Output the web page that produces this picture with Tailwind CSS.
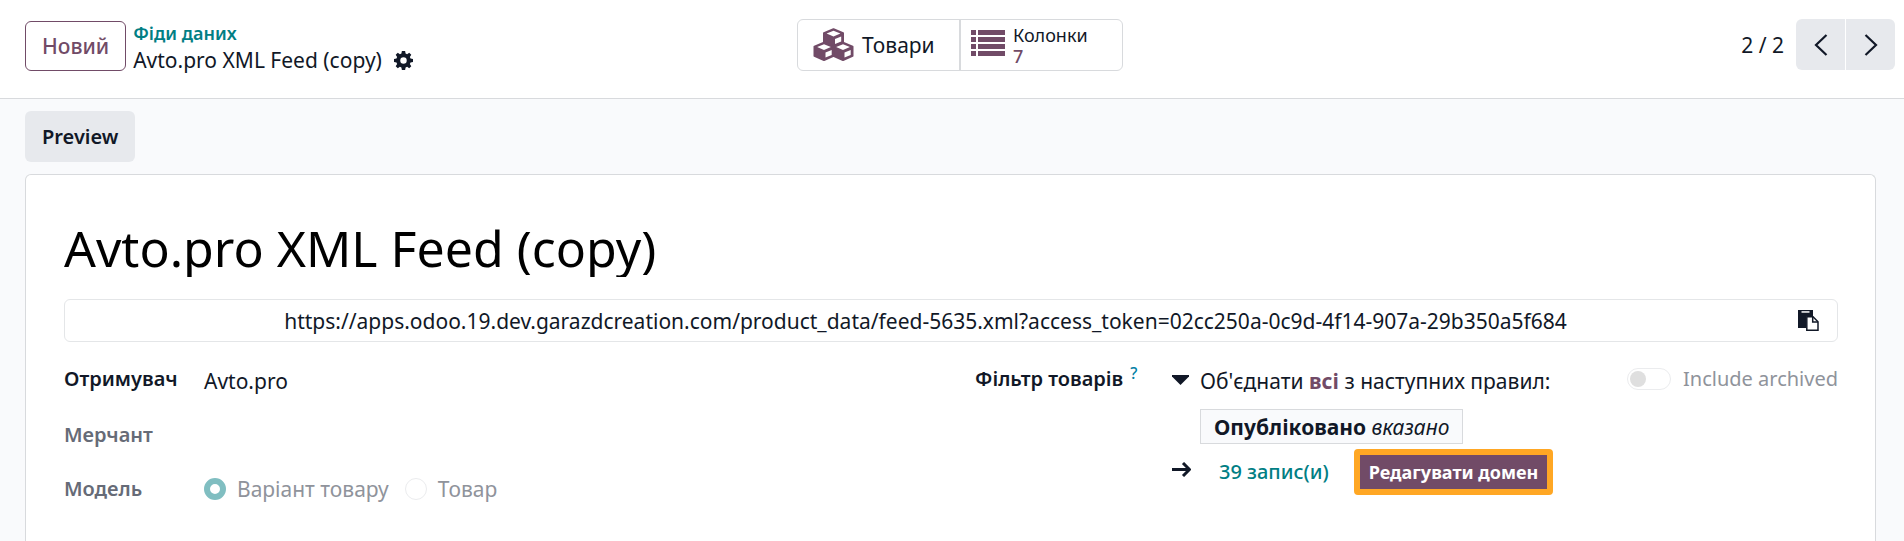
<!DOCTYPE html>
<html lang="uk">
<head>
    <meta charset="UTF-8">
    <meta name="viewport" content="width=device-width, initial-scale=1.0">
    <title>Avto.pro XML Feed (copy)</title>
    <script src="https://cdn.jsdelivr.net/npm/@tailwindcss/browser@4"></script>
</head>
<body class="min-h-screen flex flex-col bg-[#f9fafc] font-['Noto_Sans','Open_Sans',sans-serif] text-[21px] leading-[30px] text-[#111827] overflow-hidden">
    <!-- Control panel -->
    <header class="grid grid-cols-[1fr_auto_1fr] items-start bg-white border-b border-[#d8dadd] pt-[19px] pb-[23px] pl-[25px] pr-[9px]">
        <div class="flex items-start gap-[7px] pt-[2px]">
            <button class="h-[50px] px-4 rounded-md border border-[#714b67] text-[#714b67] font-medium">Новий</button>
            <div class="flex flex-col">
                <a href="#" class="text-[18px] leading-[24px] font-semibold text-[#017e84]">Фіди даних</a>
                <div class="flex items-center gap-3 leading-[30px]">
                    <span>Avto.pro XML Feed (copy)</span>
                    <button aria-label="Дії">
                        <svg class="size-[19px]" viewBox="0 0 20 20" fill="currentColor" fill-rule="evenodd"><path d="M8.300 0h3.400l.5 2.600 1.600.7L16 1.800 18.200 4l-1.500 2.200.7 1.600 2.600.5v3.400l-2.600.5-.7 1.600 1.500 2.200-2.200 2.200-2.200-1.500-1.600.7-.5 2.600H8.300l-.5-2.600-1.600-.7L4 18.200 1.800 16l1.500-2.200-.7-1.600L0 11.700V8.300l2.600-.5.7-1.600L1.800 4 4 1.800l2.200 1.500 1.600-.7zM10 6.600a3.400 3.400 0 1 0 0 6.800 3.400 3.400 0 0 0 0-6.800z"/></svg>
                    </button>
                </div>
            </div>
        </div>

        <div class="flex rounded-md border border-[#d8dadd] h-[52px]">
            <button class="flex items-center gap-2 w-[163px] pl-[15px] border-r-2 border-[#d8dadd]">
                <svg class="w-[41px] h-[34px]" viewBox="0 0 41 34" fill="#714b67" stroke="#714b67" stroke-width="2" stroke-linejoin="round">
                    <g id="cube">
                        <path d="M20.500 1.200l9.500 3.900v9.300l-9.500 4.200-9.500-4.200V5.100z"/>
                        <path d="M20.500 2.700l6.900 2.900-6.900 2.900-6.900-2.900zM22 11l6.200-2.600v5L22 16.100z" fill="#fff" stroke="none"/>
                    </g>
                    <use href="#cube" x="-9.500" y="13.500"/>
                    <use href="#cube" x="9.500" y="13.500"/>
                </svg>
                <span>Товари</span>
            </button>
            <button class="flex items-center gap-2 w-[161px] pl-[10px] text-left">
                <svg class="w-[34px] h-[26px] mb-1" viewBox="0 0 34 26" fill="#714b67"><path d="M0 0h5v5H0zM7 0h27v5H7zM0 7h5v5H0zM7 7h27v5H7zM0 14h5v5H0zM7 14h27v5H7zM0 21h5v5H0zM7 21h27v5H7z"/></svg>
                <span class="flex flex-col pt-[2px] text-[18px] leading-[21px]">
                    <span>Колонки</span>
                    <span class="text-[#714b67] font-medium">7</span>
                </span>
            </button>
        </div>

        <div class="flex items-center justify-end gap-3">
            <span>2 / 2</span>
            <div class="flex gap-px">
                <button aria-label="Назад" class="flex items-center justify-center w-[49px] h-[51px] rounded-l-md bg-[#e7e9ed]">
                    <svg class="w-[14px] h-[22px]" viewBox="0 0 14 22" fill="none" stroke="currentColor" stroke-width="2.200"><path d="M12.500 1L2 11l10.500 10"/></svg>
                </button>
                <button aria-label="Вперед" class="flex items-center justify-center w-[49px] h-[51px] rounded-r-md bg-[#e7e9ed]">
                    <svg class="w-[14px] h-[22px]" viewBox="0 0 14 22" fill="none" stroke="currentColor" stroke-width="2.200"><path d="M1.500 1L12 11 1.500 21"/></svg>
                </button>
            </div>
        </div>
    </header>

    <div class="px-[25px] py-3">
        <button class="h-[51px] px-[17px] rounded-md bg-[#e7e9ed] text-[20px] font-semibold">Preview</button>
    </div>

    <!-- Form sheet -->
    <main class="flex-1 ml-[25px] mr-[28px] pl-[38px] pr-[37px] pt-[44px] bg-white border border-b-0 border-[#d8dadd] rounded-t-md">
        <input type="text" aria-label="Назва" value="Avto.pro XML Feed (copy)" class="block w-full h-[58px] text-[50px] leading-[58px] text-black outline-none">

        <div class="flex items-center h-[43px] mt-[22px] pr-[18px] rounded-md border border-[#e4e6e8]">
            <span class="flex-1 pr-3 text-center whitespace-nowrap">https://apps.odoo.19.dev.garazdcreation.com/product_data/feed-5635.xml?access_token=02cc250a-0c9d-4f14-907a-29b350a5f684</span>
            <button aria-label="Копіювати">
                <svg class="size-[21px]" viewBox="0 0 21 21"><path d="M0 0h15v6H8v12H0z" fill="currentColor"/><path d="M3.500 1.200h8v1.500h-8z" fill="#fff"/><path d="M8.800 6.800h6.200l5 5v8.400H8.800z" fill="#fff" stroke="currentColor" stroke-width="1.500"/><path d="M14.700 6.800v5.200H20" fill="none" stroke="currentColor" stroke-width="1.500"/></svg>
            </button>
        </div>

        <div class="grid grid-cols-2 gap-12 pt-[22px]">
            <div class="grid grid-cols-[140px_1fr] auto-rows-[54px] content-start">
                <span class="text-[20px] font-semibold">Отримувач</span>
                <span class="pt-[2px]">Avto.pro</span>
                <span class="text-[20px] font-semibold text-[#666b77] pt-[2px]">Мерчант</span>
                <span></span>
                <span class="text-[20px] font-semibold text-[#666b77] pt-[2px]">Модель</span>
                <div class="flex items-start gap-4 pt-[2px] text-[#8f939b]">
                    <label class="flex items-center gap-[11px]">
                        <input type="radio" name="model" checked disabled class="appearance-none size-[22px] rounded-full border-[#80bec1] border-6 bg-white">
                        Варіант товару
                    </label>
                    <label class="flex items-center gap-[11px]">
                        <input type="radio" name="model" disabled class="appearance-none size-[22px] rounded-full border border-[#ebecee] bg-white">
                        Товар
                    </label>
                </div>
            </div>

            <div class="flex items-start">
                <div class="flex w-[197px] shrink-0 gap-[7px] text-[20px] font-semibold">Фільтр товарів <sup class="top-0 text-[16px] leading-[18px] font-medium text-[#0180a5]">?</sup></div>
                <div class="flex-1 grid grid-cols-[28px_1fr] items-center whitespace-nowrap">
                    <svg class="w-[17px] h-[10px]" viewBox="0 0 17 10" fill="currentColor"><path d="M0 0h17v1.500L8.500 10 0 1.500z"/></svg>
                    <div class="pt-[2px]">Об'єднати <b class="text-[#714b67]">всі</b> з наступних правил:</div>
                    <span></span>
                    <div class="flex pt-[13px]">
                        <div class="h-[35px] px-[13px] leading-[35px] border border-[#d8dadd] bg-[#f9fafc]"><b>Опубліковано</b> <i>вказано</i></div>
                    </div>
                    <svg class="w-[19px] h-[15px]" viewBox="0 0 19 15" fill="none" stroke="currentColor" stroke-width="3"><path d="M0 7.500h17M11 1l6.500 6.500L11 14"/></svg>
                    <div class="flex items-center gap-[25px] pt-[5px] pl-[19px]">
                        <a href="#" class="text-[20px] font-medium text-[#017e84]">39 запис(и)</a>
                        <button class="h-[46px] px-[9px] text-[18px] font-bold text-white bg-[#714b67] border-6 border-[#ffa724] rounded-sm">Редагувати домен</button>
                    </div>
                </div>
                <label class="flex items-center gap-3 text-[20px] text-[#8f939b] whitespace-nowrap">
                    <input type="checkbox" disabled class="appearance-none w-[44px] h-[22px] rounded-full border border-[#ebecee] bg-white before:block before:size-4 before:mt-[2px] before:ml-[2px] before:rounded-full before:bg-[#dfdfdf]">
                    Include archived
                </label>
            </div>
        </div>
    </main>
</body>
</html>
